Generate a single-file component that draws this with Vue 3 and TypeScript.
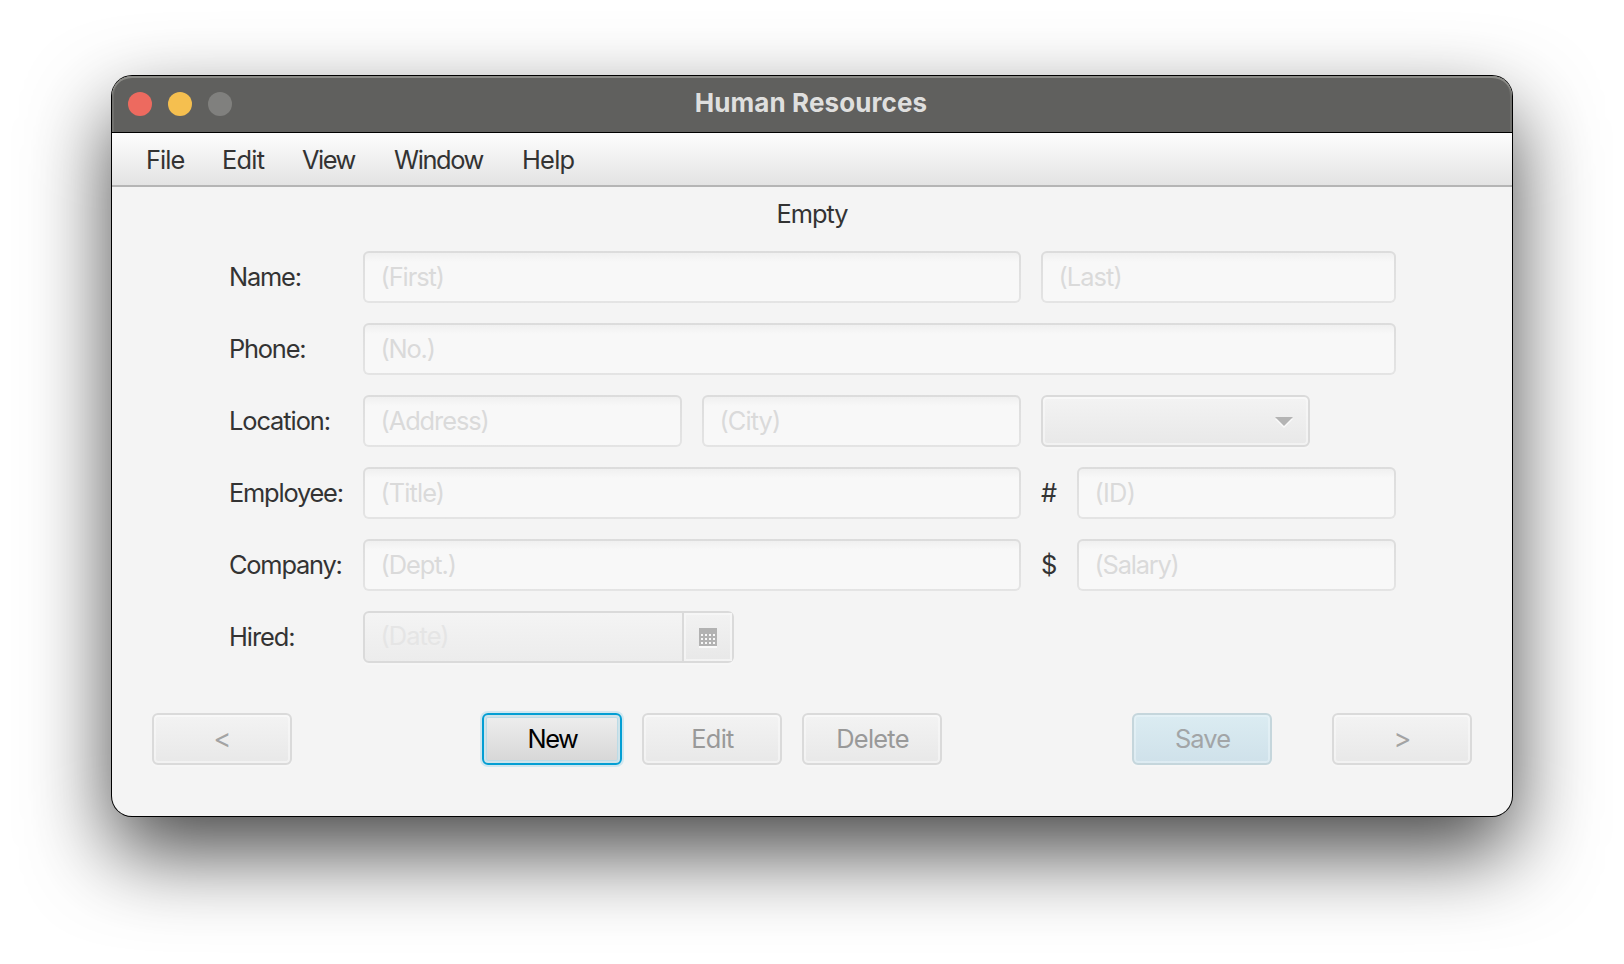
<script setup lang="ts">
interface MenuEntry {
  label: string
  tracking: string
}

interface Field {
  placeholder: string
  size: string
  tracking?: string
  prefix?: string
}

interface FormRow {
  label: string
  tracking?: string
  fields: Field[]
  combo?: boolean
  date?: boolean
}

const menus: MenuEntry[] = [
  { label: 'File', tracking: 'snug' },
  { label: 'Edit', tracking: 'loose' },
  { label: 'View', tracking: 'tight' },
  { label: 'Window', tracking: 'tighter' },
  { label: 'Help', tracking: 'loose' },
]

const rows: FormRow[] = [
  {
    label: 'Name:',
    tracking: 'firm',
    fields: [
      { placeholder: '(First)', size: 'wide' },
      { placeholder: '(Last)', size: 'medium', tracking: 'snug' },
    ],
  },
  { label: 'Phone:', tracking: 'firm', fields: [{ placeholder: '(No.)', size: 'full', tracking: 'firm' }] },
  {
    label: 'Location:',
    fields: [
      { placeholder: '(Address)', size: 'small' },
      { placeholder: '(City)', size: 'small', tracking: 'snug' },
    ],
    combo: true,
  },
  {
    label: 'Employee:',
    tracking: 'firm',
    fields: [
      { placeholder: '(Title)', size: 'wide', tracking: 'snug' },
      { placeholder: '(ID)', size: 'small', tracking: 'loose', prefix: '#' },
    ],
  },
  {
    label: 'Company:',
    tracking: 'firm',
    fields: [
      { placeholder: '(Dept.)', size: 'wide' },
      { placeholder: '(Salary)', size: 'small', tracking: 'firm', prefix: '$' },
    ],
  },
  { label: 'Hired:', fields: [], date: true },
]

const dots = [0, 1, 2].flatMap((r) => [0, 1, 2, 3].map((c) => ({ x: 2 + c * 4, y: 6 + r * 4 })))
</script>

<template>
  <div class="desktop">
    <div class="window">
      <header class="titlebar">
        <div class="lights">
          <i class="light close"></i>
          <i class="light minimize"></i>
          <i class="light zoom"></i>
        </div>
        <div class="title">Human Resources</div>
      </header>

      <nav class="menubar">
        <span v-for="m in menus" :key="m.label" :class="m.tracking">{{ m.label }}</span>
      </nav>

      <div class="status">Empty</div>

      <main class="form">
        <div v-for="row in rows" :key="row.label" class="row">
          <label class="label" :class="row.tracking">{{ row.label }}</label>
          <template v-for="f in row.fields" :key="f.placeholder">
            <span v-if="f.prefix" class="prefix">{{ f.prefix }}</span>
            <div class="field" :class="[f.size, f.tracking]"><span>{{ f.placeholder }}</span></div>
          </template>
          <div v-if="row.combo" class="combo">
            <svg width="18" height="11" viewBox="0 0 18 11">
              <path d="M0 2H18L9 11Z" fill="#fafafa" />
              <path d="M0 0H18L9 9Z" fill="#b4b4b4" />
            </svg>
          </div>
          <div v-if="row.date" class="date">
            <div class="date-text snug">(Date)</div>
            <div class="date-button">
              <svg width="18" height="20" viewBox="0 0 18 20" shape-rendering="crispEdges">
                <rect y="2" width="18" height="18" fill="#fafafa" />
                <rect width="18" height="18" fill="#b2b2b2" />
                <rect v-for="d in dots" :key="`${d.x}-${d.y}`" :x="d.x" :y="d.y" width="2" height="2" fill="#f8f8f8" />
              </svg>
            </div>
          </div>
        </div>
      </main>

      <footer class="actions">
        <button class="btn arrow" disabled>&lt;</button>
        <div class="group">
          <button class="btn focused tight">New</button>
          <button class="btn loose" disabled>Edit</button>
          <button class="btn loose" disabled>Delete</button>
        </div>
        <div class="group far">
          <button class="btn primary snug" disabled>Save</button>
          <button class="btn arrow" disabled>&gt;</button>
        </div>
      </footer>
    </div>
  </div>
</template>

<style>
body {
  background: #fff;
}
</style>

<style scoped>
.desktop {
  box-sizing: border-box;
  width: 1624px;
  height: 964px;
  padding: 76px 112px 148px;
  overflow: hidden;
  background: #fff;
  font-family: Inter, "Liberation Sans", sans-serif;
  font-size: 25.4px;
  letter-spacing: -1.07px;
  color: #333;
}
.loose { letter-spacing: -0.75px; }
.snug { letter-spacing: -0.92px; }
.firm { letter-spacing: -1.2px; }
.tighter { letter-spacing: -1.38px; }
.tight { letter-spacing: -1.5px; }

.window {
  display: flex;
  flex-direction: column;
  height: 740px;
  border-radius: 20px;
  background: #f4f4f4;
  box-shadow: 0 0 0 1px #000, 0 36px 84px rgba(0, 0, 0, 0.73);
}
.titlebar {
  box-sizing: border-box;
  display: grid;
  grid-template-columns: 1fr auto 1fr;
  align-items: center;
  height: 57px;
  padding: 0 16px;
  border-bottom: 1px solid #000;
  border-radius: 20px 20px 0 0;
  background: #60605e;
  box-shadow: inset 0 2px 0 #8b8b87, inset 2px 0 0 #70706d, inset -2px 0 0 #70706d;
}
.lights {
  display: flex;
  gap: 16px;
}
.light {
  width: 24px;
  height: 24px;
  border-radius: 50%;
}
.close { background: #ed6a5f; }
.minimize { background: #f5bf4f; }
.zoom { background: #80807e; }
.title {
  padding: 0 2px 3px 0;
  font-size: 26px;
  font-weight: 700;
  letter-spacing: 0.1px;
  color: #dfdfde;
}
.menubar {
  display: grid;
  grid-template-columns: 76px 80px 92px 128px auto;
  align-items: center;
  height: 52px;
  padding-left: 34px;
  border-bottom: 2px solid #b5b5b5;
  background: linear-gradient(#fdfdfd, #e3e3e3);
}
.status {
  height: 64px;
  line-height: 54px;
  text-align: center;
}
.form {
  display: flex;
  flex-direction: column;
  gap: 20px;
  padding-left: 117px;
}
.row {
  display: flex;
  align-items: center;
  gap: 20px;
  height: 52px;
}
.label,
.prefix {
  padding-bottom: 2px;
}
.label {
  width: 114px;
  white-space: nowrap;
}
.prefix {
  width: 16px;
  letter-spacing: 0;
}
.field {
  box-sizing: border-box;
  display: flex;
  align-items: center;
  height: 52px;
  padding: 0 0 2px 15.5px;
  border: 2px solid transparent;
  border-radius: 6px;
  color: #dadada;
  background:
    linear-gradient(#f0f0f0, #f8f8f8 9px) padding-box,
    linear-gradient(#dcdcdc, #e4e4e4) border-box;
}
.full { width: 1033px; }
.wide { width: 658px; }
.medium { width: 355px; }
.small { width: 319px; }

.combo,
.btn {
  box-sizing: border-box;
  height: 52px;
  border: 2px solid #dadada;
  border-radius: 6px;
  background: linear-gradient(#f3f3f3, #e8e8e8);
  box-shadow: inset 0 2px 0 #f8f8f8, inset 0 0 0 2px rgba(248, 248, 248, 0.6), 0 2px 0 #f6f6f6;
}
.combo {
  display: flex;
  align-items: center;
  justify-content: flex-end;
  width: 269px;
  padding-right: 15px;
}
.combo svg {
  margin-top: 3px;
}
.date {
  box-sizing: border-box;
  display: flex;
  width: 371px;
  height: 52px;
  border: 2px solid #dadada;
  border-radius: 6px;
  background: linear-gradient(#f4f4f4, #ececec);
  box-shadow: 0 2px 0 #f6f6f6;
}
.date-text {
  width: 317px;
  padding-left: 15.5px;
  box-sizing: border-box;
  line-height: 46px;
  color: #e5e5e5;
}
.date-button {
  display: flex;
  flex: 1;
  align-items: center;
  justify-content: center;
  border-left: 2px solid #dadada;
  background: linear-gradient(#f2f2f2, #e8e8e8);
  box-shadow: inset 0 0 0 2px rgba(248, 248, 248, 0.7);
}
.date-button svg {
  margin-top: 2px;
}
.actions {
  display: flex;
  margin-top: 50px;
  padding: 0 40px;
}
.group {
  display: flex;
  gap: 20px;
  margin-left: 190px;
}
.group.far {
  gap: 60px;
}
.btn {
  width: 140px;
  padding: 0 0 1px 1px;
  font-family: inherit;
  font-size: inherit;
  color: #999;
  text-align: center;
}
.arrow {
  font-size: 27px;
  color: #a3a3a3;
}
.focused {
  border-color: #039ed3;
  color: #000;
  background: linear-gradient(#eeeeee, #d6d6d6);
  box-shadow:
    inset 0 0 0 2px #cfe3ea,
    inset 0 0 0 3px #bcdbe6,
    0 0 0 2px #cfe7f0;
}
.primary {
  border-color: #c5d6dc;
  color: #a2a5a7;
  background: linear-gradient(#dbecf2, #cfe1ea);
  box-shadow: inset 0 0 0 2px rgba(236, 246, 250, 0.5), 0 2px 0 #f6f6f6;
}
</style>
